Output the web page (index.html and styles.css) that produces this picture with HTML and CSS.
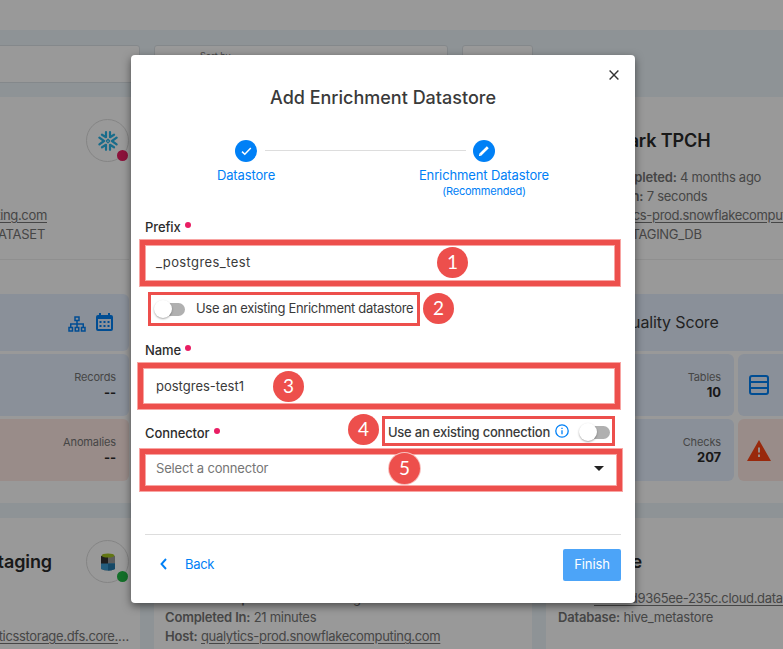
FILE: index.html
```html
<!DOCTYPE html>
<html lang="en">
<head>
<meta charset="utf-8">
<title>Add Enrichment Datastore</title>
<link rel="stylesheet" href="styles.css">
</head>
<body>
<div class="page">
  <header class="topbar"></header>
  <div class="filters">
    <div class="filter"></div>
    <div class="filter"><span class="filter-label">Sort by</span></div>
    <div class="filter filter-small"></div>
  </div>
  <main class="cards">
    <article class="card card-left">
      <div class="card-head">
        <span class="logo"><svg width="20" height="20" viewBox="0 0 20 20" fill="none" stroke="#29b5e8" stroke-width="2.2" stroke-linecap="round" stroke-linejoin="round"><path d="M8 1.2v5L4 3.7M12 1.2v5l4-2.5M8 18.8v-5l-4 2.5M12 18.8v-5l4 2.5M1.4 6.7 6 10l-4.6 3.3M18.600 6.700 14 10l4.600 3.300"/><path d="m10 8.300 1.700 1.700-1.700 1.700L8.300 10z" stroke-width="1.300"/></svg><i class="status status-bad"></i></span>
      </div>
      <div class="facts">
        <p></p><p></p>
        <p class="end-host"><u>ting.com</u></p>
        <p class="end-data">ATASET</p>
      </div>
      <div class="stats">
        <div class="score score-icons">
          <svg width="18" height="16" viewBox="0 0 18 16" fill="none" stroke="#0080f6" stroke-width="1.500"><path d="M7 1h4v3.500H7zM1 11.500h3.500V15H1zM7.250 11.500h3.500V15h-3.500zM13.500 11.500H17V15h-3.500zM9 4.500v7M2.750 11.500V8h12.500v3.500"/></svg>
          <svg width="17" height="18" viewBox="0 0 17 18"><path fill="#0080f6" fill-rule="evenodd" d="M3 0h2v2h7V0h2v2h1a2 2 0 0 1 2 2v12a2 2 0 0 1-2 2H2a2 2 0 0 1-2-2V4a2 2 0 0 1 2-2h1zM2 6v10h13V6zM3.500 8h2v2h-2zm4 0h2v2h-2zm4 0h2v2h-2zm-8 4h2v2h-2zm4 0h2v2h-2zm4 0h2v2h-2z"/></svg>
        </div>
        <div class="stat"></div><div class="stat"><span>Records</span><b>--</b></div>
        <div class="stat"></div><div class="stat stat-alert"><span>Anomalies</span><b>--</b></div>
      </div>
    </article>
    <article class="card card-mid"></article>
    <article class="card">
      <div class="card-head"><h2>Benchmark TPCH</h2></div>
      <div class="facts">
        <p class="profile"><b>Profile Completed:</b> 4 months ago</p>
        <p><b>Completed In:</b> 7 seconds</p>
        <p><b>Host:</b> <u>qualytics-prod.snowflakecomputing.com</u></p>
        <p><b>Database:</b> STAGING_DB</p>
      </div>
      <div class="stats">
        <div class="score"><span class="score-text">Quality Score</span></div>
        <div class="stat"><span>Tables</span><b>10</b></div>
        <div class="stat stat-icon"><svg width="20" height="20" viewBox="0 0 20 20" fill="none" stroke="#0080f6" stroke-width="2"><rect x="1" y="1" width="18" height="18" rx="2"/><path d="M1 7h18M1 13h18"/></svg></div>
        <div class="stat"><span>Checks</span><b>207</b></div>
        <div class="stat stat-icon stat-alert"><svg width="24" height="21" viewBox="0 0 24 21"><path fill="#ff4514" fill-rule="evenodd" d="M12 0 24 21H0zM11 7.500v5h2v-5zm0 7v2.500h2v-2.500z"/></svg></div>
      </div>
    </article>
    <article class="card card-left">
      <div class="card-head"><h2 class="end-title">taging</h2>
        <span class="logo"><svg width="16" height="18" viewBox="0 0 16 18"><path fill="#9a9a9a" d="M1 3h14v13q-7 3-14 0z"/><path fill="#333" d="M1 3h7v8H1z"/><path fill="#3d9bd0" d="M1 10.500h14V16q-7 3-14 0z"/><path fill="#2378aa" d="M8 10.500h7V16q-3.500 1.500-7 1.500z"/><ellipse cx="8" cy="2.500" rx="6.500" ry="2" fill="#a4c520"/></svg><i class="status status-good"></i></span>
      </div>
      <div class="facts"><p></p><p></p><p class="end-storage"><u>ticsstorage.dfs.core.</u>…</p></div>
    </article>
    <article class="card card-mid">
      <div class="card-head"></div>
      <div class="facts">
        <p class="profile"><b>Profile Completed:</b> 4 months ago</p>
        <p><b>Completed In:</b> 21 minutes</p>
        <p><b>Host:</b> <u>qualytics-prod.snowflakecomputing.com</u></p>
      </div>
    </article>
    <article class="card">
      <div class="card-head"><h2 class="hive">Hive</h2></div>
      <div class="facts">
        <p><b>Host:</b> <u>dbc-0d9365ee-235c.cloud.databricks.com</u></p>
        <p><b>Database:</b> hive_metastore</p>
      </div>
    </article>
  </main>
</div>
<div class="scrim"></div>

<section class="modal">
  <svg class="close" width="10" height="10" viewBox="0 0 10 10" fill="none" stroke="#333" stroke-width="1.400"><path d="m.6.600 8.800 8.800M9.400.600.600 9.400"/></svg>
  <h1>Add Enrichment Datastore</h1>
  <div class="stepper">
    <div class="step">
      <span class="bullet"><svg width="11" height="9" viewBox="0 0 11 9" fill="none" stroke="#fff" stroke-width="1.500"><path d="m1 4.600 2.800 2.700L9.800 1"/></svg></span>
      <span class="step-name">Datastore</span>
    </div>
    <div class="step">
      <span class="bullet"><svg width="12" height="12" viewBox="0 0 12 12" fill="none" stroke="#fff"><path d="M2.200 9.800 9.800 2.200" stroke-width="2.700"/><path d="M1 8.700v2.300h2.300z" fill="#fff" stroke="none"/></svg></span>
      <span class="step-name">Enrichment Datastore</span>
      <small>(Recommended)</small>
    </div>
    <i class="rail"></i>
  </div>
  <form class="form">
    <div class="label"><span>Prefix</span><i></i></div>
    <div class="field field-prefix">_postgres_test</div>
    <div class="toggle-row"><span class="switch"></span><span class="toggle-text">Use an existing Enrichment datastore</span></div>
    <div class="label"><span>Name</span><i></i></div>
    <div class="field field-name">postgres-test1</div>
    <div class="connector-row">
      <div class="label"><span>Connector</span><i></i></div>
      <div class="connection"><span class="connection-text">Use an existing connection</span><svg width="14" height="14" viewBox="0 0 14 14" fill="none" stroke="#0080f6" stroke-width="1.300"><circle cx="7" cy="7" r="6.200"/><path d="M7 6.200v4M7 3.700v1.400"/></svg><span class="switch"></span></div>
    </div>
    <div class="field field-select"><span>Select a connector</span><i class="caret"></i></div>
  </form>
  <footer class="actions">
    <span class="back"><svg width="7" height="12" viewBox="0 0 7 12" fill="none" stroke="#0080f6" stroke-width="1.900"><path d="M6 1 1.500 6 6 11"/></svg><span>Back</span></span>
    <span class="finish">Finish</span>
  </footer>
</section>

<div class="marks">
  <i class="frame thick f1"></i><i class="frame f2"></i><i class="frame thick f3"></i><i class="frame f4"></i><i class="frame thick f5"></i>
  <b class="num n1">1</b><b class="num n2">2</b><b class="num n3">3</b><b class="num n4">4</b><b class="num n5">5</b>
</div>
</body>
</html>
```
FILE: styles.css
```css
* { box-sizing: border-box; }
body { margin: 0; width: 783px; height: 649px; overflow: hidden; position: relative; font-family: Inter, "Liberation Sans", sans-serif; font-size: 13px; color: #3a3a3a; background: #fff; }
p, h1, h2 { margin: 0; }
i { font-style: normal; }

.page { width: 783px; height: 649px; overflow: hidden; background: #edf5fb; }
.topbar { height: 30px; background: #fff; }
.filters { display: flex; gap: 14px; height: 67px; padding-top: 15px; margin-left: -238px; width: 1162px; }
.filter { flex: 0 0 378px; height: 38px; background: #fff; border: 1px solid #dde3e8; border-radius: 3px; }
.filter:nth-child(2) { flex-basis: 294px; }
.filter-small { flex-basis: 71px; }
.filter-label { display: block; margin: 3px 0 0 45px; font-size: 9px; line-height: 14px; color: #777; }
.cards { display: grid; grid-template-columns: repeat(3, 378px); grid-template-rows: 406px 406px; gap: 15px 14px; margin-left: -238px; }
.card { background: #fff; padding: 22px 11px 0 12px; min-width: 0; overflow: hidden; }
.card-mid { padding-left: 11px; }
.card-head { display: flex; align-items: center; height: 43px; }
.card-left .card-head { justify-content: flex-end; }
h2 { font-size: 18px; line-height: 24px; font-weight: 600; color: #2a2a2a; white-space: nowrap; letter-spacing: -.1px; }
.end-title { margin-right: 34px; }
.hive { width: 84px; text-align: right; }
.logo { position: relative; display: flex; align-items: center; justify-content: center; width: 43px; height: 43px; border: 1px solid #ddd; border-radius: 50%; }
.status { position: absolute; right: 0; bottom: 0; width: 11px; height: 11px; border-radius: 50%; }
.status-bad { background: #e91e63; }
.status-good { background: #21ba45; }
.facts { padding-top: 6px; height: 98px; color: #757575; white-space: nowrap; border-bottom: 1px solid #eee; letter-spacing: -.28px; }
.facts p { height: 19px; line-height: 19px; }
.facts b { font-weight: 600; letter-spacing: -.18px; }
.facts u { letter-spacing: -.33px; }
.facts .profile { padding-left: 5px; }
u { text-underline-offset: 2px; }
.card-left .facts p { text-align: right; }
.card-left .end-host { padding-right: 82px; }
.card-left .end-data { padding-right: 84px; }
.stats { display: grid; grid-template-columns: 1fr 1fr; grid-template-rows: 57px 62px 62px; gap: 3px; margin-top: 34px; }
.score { grid-column: 1 / 3; display: flex; align-items: center; border-radius: 6px; background: #e6f0ff; font-size: 16px; letter-spacing: -.15px; }
.score-text { padding: 0 0 2px 61px; }
.score-icons { justify-content: flex-end; gap: 10px; padding-right: 16px; }
.score-icons svg:first-child { margin-top: 3px; }
.score-icons svg:last-child { margin-top: -2px; }
.stat { display: flex; flex-direction: column; align-items: flex-end; justify-content: center; border-radius: 6px; background: #e6f0ff; padding: 0 13px 0 0; font-size: 11px; line-height: 15px; color: #757575; letter-spacing: -.12px; }
.stat b { font-size: 13px; color: #2a2a2a; }
.stat-icon { align-items: flex-start; padding: 0 0 0 11px; margin-left: 1px; }
.stat-alert { background: #ffe9e4; }
.stat-icon.stat-alert { padding-left: 9px; }
.scrim { position: absolute; inset: 0; background: rgba(0, 0, 0, .4); }

.modal { position: absolute; left: 131px; top: 55px; width: 504px; height: 548px; padding: 30px 14px 0; background: #fff; border-radius: 4px; box-shadow: 0 3px 9px rgba(0, 0, 0, .5); }
.close { position: absolute; right: 16px; top: 15px; }
h1 { font-size: 18px; line-height: 25px; font-weight: 500; text-align: center; letter-spacing: 0; }
.stepper { position: relative; display: grid; grid-template-columns: 238px 238px; margin: 30px 0 0 -18px; height: 76px; color: #0080f6; }
.step { display: flex; flex-direction: column; align-items: center; }
.bullet { display: flex; align-items: center; justify-content: center; width: 22px; height: 22px; border-radius: 50%; background: #0080f6; }
.step-name { line-height: 17px; margin-top: 5px; letter-spacing: -.13px; }
.step small { font-size: 11px; line-height: 14px; letter-spacing: -.2px; }
.rail { position: absolute; left: 138px; width: 201px; top: 10px; height: 1px; background: #ddd; }
.label { display: flex; height: 18px; line-height: 18px; font-weight: 500; color: #2c2c2c; letter-spacing: -.1px; }
.label i { width: 6px; height: 6px; border-radius: 50%; background: #e91e63; margin: 4px 0 0 4px; }
.form { margin-top: 2px; }
.field { display: flex; align-items: center; height: 37px; padding: 0 0 2px 10px; border: 1px solid transparent; }
.field-prefix { margin-top: 8px; letter-spacing: .4px; }
.toggle-row { display: flex; align-items: center; height: 24px; margin: 16px 0 20px 10px; }
.toggle-text { margin: -2px 0 0 11px; letter-spacing: -.32px; white-space: nowrap; }
.switch { position: relative; width: 28px; height: 13px; border-radius: 7px; background: #b0b0b0; margin-left: 2px; }
.switch::before { content: ""; position: absolute; left: -3px; top: -3px; width: 18px; height: 18px; border-radius: 50%; background: #fff; box-shadow: 0 1px 2px rgba(0, 0, 0, .35); }
.field-name { margin-top: 9px; }
.connector-row { display: flex; justify-content: space-between; align-items: center; height: 24px; margin: 16px 11px 0 0; }
.connector-row .label i { margin-left: 5px; }
.connection { display: flex; align-items: center; font-weight: 500; margin-top: -3px; }
.connection-text { letter-spacing: -.22px; }
.connection svg { margin: -1px 11px 0 5px; }
.connection .switch { top: 1px; }
.field-select { margin-top: 5px; color: #757575; justify-content: space-between; padding-right: 16px; letter-spacing: -.17px; }
.caret { border: 5px solid transparent; border-top-color: #222; border-bottom: 0; margin-top: 2px; }
.actions { position: absolute; left: 14px; right: 14px; top: 479px; height: 47px; border-top: 1px solid #ddd; padding-top: 14px; display: flex; justify-content: space-between; color: #0080f6; }
.back { display: flex; align-items: center; gap: 18px; height: 30px; padding-left: 15px; letter-spacing: -.3px; }
.finish { width: 58px; height: 32px; line-height: 31px; border-radius: 2px; background: #4ca4f8; color: #fff; text-align: center; letter-spacing: -.1px; }

.frame { position: absolute; border: 3px solid #ed4f4c; }
.thick { border: 1px solid #f8a5a3; box-shadow: inset 0 0 0 5px #ed4f4c, inset 0 0 0 6px #f8a5a3; }
.f1 { left: 139px; top: 239px; width: 482px; height: 48px; }
.f2 { left: 148px; top: 292px; width: 272px; height: 34px; }
.f3 { left: 137px; top: 362px; width: 484px; height: 48px; }
.f4 { left: 382px; top: 416px; width: 233px; height: 30px; }
.f5 { left: 139px; top: 448px; width: 484px; height: 44px; }
.num { position: absolute; width: 31px; height: 31px; border-radius: 50%; background: #ed4f4c; color: #fff; font: 400 19px/30px Lato, sans-serif; text-align: center; }
.n1 { left: 437px; top: 247px; }
.n2 { left: 423px; top: 293px; }
.n3 { left: 273px; top: 371px; }
.n4 { left: 348px; top: 414px; }
.n5 { left: 389px; top: 453px; box-shadow: 0 0 0 1px #f8c0be; }
```
